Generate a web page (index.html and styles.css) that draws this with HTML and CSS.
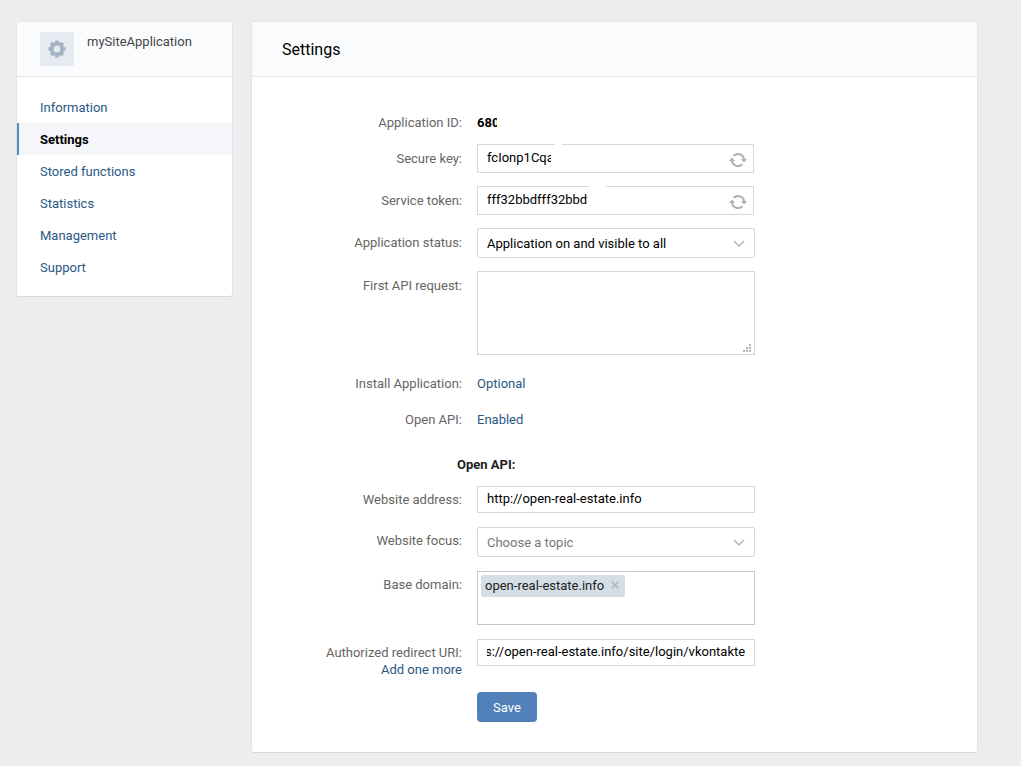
FILE: index.html
```html
<!doctype html>
<html lang="en">
<head>
    <meta charset="UTF-8">
    <meta name="viewport" content="width=device-width, initial-scale=1.0">
    <title>Settings</title>
    <link rel="stylesheet" href="styles.css">
</head>
<body>
<div class="layout">
    <aside class="card sidebar">
        <div class="app">
            <div class="app-icon">
                <svg width="18" height="18" viewBox="0 0 18 18">
                    <g fill="#a3b3c5">
                        <rect x="7" y="0.5" width="4" height="17" rx="1"/>
                        <rect x="7" y="0.5" width="4" height="17" rx="1" transform="rotate(45 9 9)"/>
                        <rect x="7" y="0.5" width="4" height="17" rx="1" transform="rotate(90 9 9)"/>
                        <rect x="7" y="0.5" width="4" height="17" rx="1" transform="rotate(135 9 9)"/>
                        <circle cx="9" cy="9" r="7"/>
                    </g>
                    <circle cx="9" cy="9" r="3.4" fill="#e5ebf1"/>
                </svg>
            </div>
            <span class="app-name">mySiteApplication</span>
        </div>
        <nav class="menu">
            <a href="#">Information</a>
            <a href="#" class="active">Settings</a>
            <a href="#">Stored functions</a>
            <a href="#">Statistics</a>
            <a href="#">Management</a>
            <a href="#">Support</a>
        </nav>
    </aside>

    <main class="card content">
        <h1 class="title">Settings</h1>
        <form class="form">
            <div class="row">
                <span class="label">Application ID:</span>
                <b class="app-id">680</b>
            </div>
            <div class="row">
                <label class="label" for="key">Secure key:</label>
                <div class="field secret secret-key">
                    <input type="text" id="key" value="fcIonp1Cqa">
                    <button type="button" class="refresh" aria-label="Refresh key">
                        <svg width="18" height="16" viewBox="0 0 18 16">
                            <path d="M4.6 3.9A6 6 0 0 1 15 8M13.4 12.1A6 6 0 0 1 3 8" fill="none" stroke="#a9b0b8" stroke-width="2"/>
                            <path d="M12 7H18L15 10.5ZM0 9H6L3 5.5Z" fill="#a9b0b8"/>
                        </svg>
                    </button>
                </div>
            </div>
            <div class="row">
                <label class="label" for="token">Service token:</label>
                <div class="field secret secret-token">
                    <input type="text" id="token" value="fff32bbdfff32bbdf">
                    <button type="button" class="refresh" aria-label="Refresh token">
                        <svg width="18" height="16" viewBox="0 0 18 16">
                            <path d="M4.6 3.9A6 6 0 0 1 15 8M13.4 12.1A6 6 0 0 1 3 8" fill="none" stroke="#a9b0b8" stroke-width="2"/>
                            <path d="M12 7H18L15 10.5ZM0 9H6L3 5.5Z" fill="#a9b0b8"/>
                        </svg>
                    </button>
                </div>
            </div>
            <div class="row">
                <label class="label" for="status">Application status:</label>
                <div class="field select">
                    <select id="status">
                        <option>Application on and visible to all</option>
                    </select>
                    <svg width="12" height="8" viewBox="0 0 12 8"><path d="M1 1L6 6L11 1" fill="none" stroke="#b0b5bb" stroke-width="1.5"/></svg>
                </div>
            </div>
            <div class="row row-area">
                <label class="label" for="request">First API request:</label>
                <div class="field area">
                    <textarea id="request"></textarea>
                    <svg width="8" height="8" viewBox="0 0 8 8" fill="#b5b5b5"><path d="M6 0h2v2H6zM3 3h2v2H3zM6 3h2v2H6zM0 6h2v2H0zM3 6h2v2H3zM6 6h2v2H6z"/></svg>
                </div>
            </div>
            <div class="row">
                <span class="label">Install Application:</span>
                <a href="#" class="value">Optional</a>
            </div>
            <div class="row">
                <span class="label">Open API:</span>
                <a href="#" class="value">Enabled</a>
            </div>

            <h2 class="subtitle">Open API:</h2>

            <div class="open-api">
                <div class="row">
                    <label class="label" for="address">Website address:</label>
                    <input type="text" class="field text" id="address" value="http://open-real-estate.info">
                </div>
                <div class="row">
                    <label class="label" for="focus">Website focus:</label>
                    <div class="field select select-empty">
                        <select id="focus">
                            <option>Choose a topic</option>
                        </select>
                        <svg width="12" height="8" viewBox="0 0 12 8"><path d="M1 1L6 6L11 1" fill="none" stroke="#b0b5bb" stroke-width="1.5"/></svg>
                    </div>
                </div>
                <div class="row">
                    <label class="label" for="domain">Base domain:</label>
                    <div class="field tags">
                        <span class="tag">open-real-estate.info
                            <button type="button" aria-label="Remove">
                                <svg width="8" height="8" viewBox="0 0 8 8"><path d="M0.5 0.5L7.5 7.5M7.5 0.5L0.5 7.5" stroke="#a9b4c0" stroke-width="1.5"/></svg>
                            </button>
                        </span>
                        <input type="text" id="domain">
                    </div>
                </div>
                <div class="row">
                    <div class="label">
                        <label for="uri">Authorized redirect URI:</label>
                        <a href="#">Add one more</a>
                    </div>
                    <input type="text" class="field text" id="uri" value="https://open-real-estate.info/site/login/vkontakte">
                </div>
            </div>
            <button type="submit" class="save">Save</button>
        </form>
    </main>
</div>
<script>
    // show the end of the long redirect address
    var uri = document.getElementById("uri");
    uri.scrollLeft = uri.scrollWidth;
</script>
</body>
</html>
```
FILE: styles.css
```css
*{
    box-sizing: border-box;
}
body{
    margin: 0;
    background-color: #ebedef;
    color: #000;
    font-family: Roboto, "Liberation Sans", sans-serif;
    font-size: 13px;
    line-height: 17px;
}
a{
    color: #2a5885;
    text-decoration: none;
}
input, select, textarea, button{
    font: inherit;
    color: inherit;
}
button{
    padding: 0;
    border: 0;
    background: none;
    cursor: pointer;
}
.layout{
    display: flex;
    align-items: flex-start;
    gap: 20px;
    padding: 22px 44px 14px 17px;
}
.card{
    background-color: #fff;
    border-radius: 2px;
    box-shadow: 0 1px 0 0 #d7d8db, 0 0 0 1px #e3e4e8;
}
.sidebar{
    flex: 0 0 215px;
    padding-bottom: 13px;
}
.app{
    display: flex;
    gap: 13px;
    height: 55px;
    padding: 10px 23px;
    background-color: #fafbfc;
    border-bottom: 1px solid #e7e8ec;
}
.app-icon{
    display: flex;
    align-items: center;
    justify-content: center;
    width: 34px;
    height: 34px;
    background-color: #e5ebf1;
    border-radius: 2px;
}
.app-name{
    padding-top: 1px;
    color: #454647;
}
.menu{
    padding-top: 14px;
}
.menu a{
    display: block;
    padding: 8px 21px 7px;
    border-left: 2px solid transparent;
}
.menu .active{
    color: #000;
    font-weight: 700;
    background-color: #f5f6fa;
    border-color: #5b88bd;
}
.content{
    flex: 1;
}
.title{
    margin: 0;
    padding: 19px 30px 18px;
    font-size: 16px;
    font-weight: 400;
    background-color: #fafbfc;
    border-bottom: 1px solid #e7e8ec;
}
.form{
    padding: 31px 0 30px;
}
.row{
    display: flex;
    gap: 15px;
    margin-bottom: 13px;
}
.row-area, .open-api .row{
    margin-bottom: 14px;
}
.label{
    flex: 0 0 210px;
    padding-top: 6px;
    color: #656565;
    text-align: right;
}
.open-api .label{
    padding-top: 5px;
}
.label label, .label a{
    display: block;
}
.app-id{
    width: 20px;
    padding-top: 6px;
    overflow: hidden;
}
.value{
    padding-top: 6px;
}
.field{
    position: relative;
    width: 278px;
    background-color: #fff;
    border: 1px solid #d3d9de;
}
.field:focus, .field input:focus, .field select:focus, .field textarea:focus{
    outline: none;
}
.field input, .field select, .field textarea{
    border: 0;
    background: none;
}
.secret{
    display: flex;
    align-items: center;
    justify-content: space-between;
    width: 277px;
    height: 29px;
    padding: 0 6px 0 9px;
}
.secret input{
    width: 64px;
    padding: 0 0 2px;
}
.secret-token input{
    width: 101px;
}
.secret::before{
    content: "";
    position: absolute;
    top: -1px;
    left: 77px;
    width: 7px;
    height: 1px;
    background-color: #fff;
}
.secret-token::before{
    left: 111px;
    width: 17px;
}
.refresh{
    display: flex;
    padding-top: 2px;
}
.select{
    height: 30px;
    border-radius: 2px;
}
.select select{
    display: block;
    width: 100%;
    height: 28px;
    padding: 0 30px 0 9px;
    appearance: none;
}
.select svg{
    position: absolute;
    top: 11px;
    right: 9px;
    pointer-events: none;
}
.select-empty{
    color: #777;
}
.area textarea{
    display: block;
    width: 100%;
    height: 82px;
    padding: 5px 9px;
    resize: none;
}
.area svg{
    position: absolute;
    right: 3px;
    bottom: 2px;
}
.subtitle{
    margin: 0;
    padding: 15px 0 13px 205px;
    font-size: 13px;
    font-weight: 700;
    color: #222;
}
.text{
    height: 27px;
    padding: 0 9px 2px;
}
.tags{
    height: 54px;
    padding: 3px;
    border-color: #c0c8d0;
}
.tag{
    display: inline-flex;
    align-items: center;
    gap: 7px;
    height: 22px;
    padding: 0 6px 2px 4px;
    color: #222;
    background-color: #d5dde6;
    border-radius: 2px;
}
.tag button{
    display: flex;
}
.tags input{
    display: block;
    width: 100%;
}
.save{
    display: block;
    height: 30px;
    margin-left: 225px;
    padding: 0 16px;
    color: #fff;
    background-color: #5181b8;
    border-radius: 4px;
}
```
